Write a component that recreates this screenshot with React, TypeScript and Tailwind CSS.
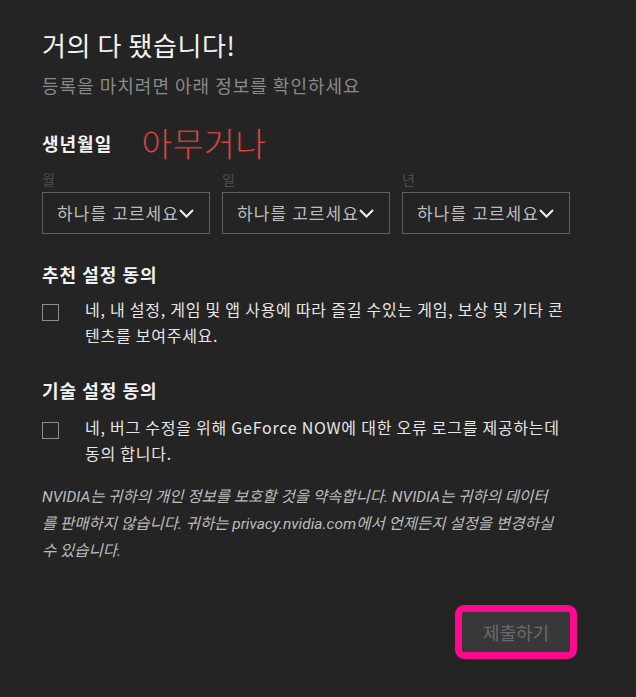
const font = "font-['Noto_Sans_CJK_KR','Noto_Sans',sans-serif]";

const dateFields = ["월", "일", "년"];

function Chevron() {
  return (
    <svg width="15" height="9" viewBox="0 0 15 9" fill="none" className="shrink-0">
      <polyline points="1,1 7.5,7.5 14,1" stroke="#f2f2f2" strokeWidth="2" />
    </svg>
  );
}

function DateSelect({ label }: { label: string }) {
  return (
    <div className="flex w-[168px] flex-col">
      <span className="text-[14px] leading-4 text-[#4f4f4f]">{label}</span>
      <div className="mt-[5px] flex h-[42px] items-center border border-[#5f5f5f] pl-[14px] text-[17px] tracking-[1.1px] text-[#bdbdbd]">
        <span>하나를 고르세요</span>
        <Chevron />
      </div>
    </div>
  );
}

function ConsentRow({ children }: { children: React.ReactNode }) {
  return (
    <div className="flex items-start">
      <div className="mt-2 h-[17px] w-[17px] shrink-0 border-[1.5px] border-[#8c8c8c]" />
      <p className="ml-[26px] text-[16px] leading-[26px] tracking-[0.75px] text-[#e6e6e6]">{children}</p>
    </div>
  );
}

export default function App() {
  return (
    <div className={`${font} min-h-[697px] w-[636px] bg-[#242424] pl-[42px] pr-[40px] pt-[29px]`}>
      <h1 className="text-[26px] leading-8 tracking-[0.6px] text-[#f2f2f2]">거의 다 됐습니다!</h1>
      <p className="mt-3 text-[18px] leading-6 tracking-[1px] text-[#8a8a8a]">등록을 마치려면 아래 정보를 확인하세요</p>

      <div className="mt-7 flex items-center">
        <span className="text-[18px] font-bold leading-6 tracking-[1px] text-[#f2f2f2]">생년월일</span>
        <span className="ml-[29px] text-[34px] leading-9 text-[#e8443f] [-webkit-text-stroke:0.9px_#242424]">아무거나</span>
      </div>

      <div className="mt-[10px] flex gap-3">
        {dateFields.map((field) => (
          <DateSelect key={field} label={field} />
        ))}
      </div>

      <h2 className="mt-7 text-[18px] font-bold leading-6 tracking-[1px] text-[#f2f2f2]">추천 설정 동의</h2>
      <div className="mt-[10px]">
        <ConsentRow>
          네, 내 설정, 게임 및 앱 사용에 따라 즐길 수있는 게임, 보상 및 기타 콘<br />
          텐츠를 보여주세요.
        </ConsentRow>
      </div>

      <h2 className="mt-[30px] text-[18px] font-bold leading-6 tracking-[1px] text-[#f2f2f2]">기술 설정 동의</h2>
      <div className="mt-3">
        <ConsentRow>
          네, 버그 수정을 위해 GeForce NOW에 대한 오류 로그를 제공하는데<br />
          동의 합니다.
        </ConsentRow>
      </div>

      <p className="mt-[18px] font-['Roboto','Noto_Sans_CJK_KR',sans-serif] text-[15.5px] italic leading-[27px] text-[#bdbdbd]">
        NVIDIA는 귀하의 개인 정보를 보호할 것을 약속합니다. NVIDIA는 귀하의 데이터<br />
        를 판매하지 않습니다. 귀하는 privacy.nvidia.com에서 언제든지 설정을 변경하실<br />
        수 있습니다.
      </p>

      <div className="mt-[47px] flex w-[528px] justify-end">
        <button
          type="button"
          className="h-10 w-[108px] rounded-[2px] bg-[#383838] text-[18px] text-[#6a6a6a] outline-[7px] outline-[#ff0a8c] outline-solid"
        >
          제출하기
        </button>
      </div>
    </div>
  );
}
